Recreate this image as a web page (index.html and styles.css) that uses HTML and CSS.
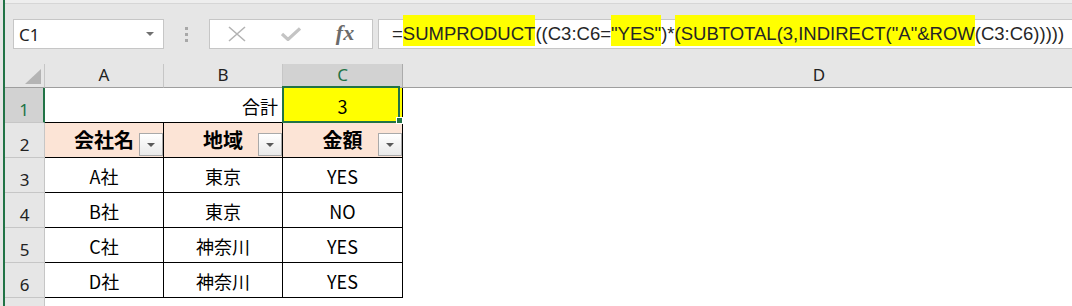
FILE: index.html
```html
<!DOCTYPE html>
<html lang="ja">
<head>
  <meta charset="UTF-8" />
  <title>Excel - SUMPRODUCT</title>
  <link rel="stylesheet" href="styles.css">
</head>
<body>
  <div class="excel">
    <div class="toolbar">
      <div class="ribbon-edge"></div>
      <div class="formula-row">
        <div class="namebox">
          <span>C1</span>
          <span class="caret"></span>
        </div>
        <div class="grip"><i></i><i></i><i></i></div>
        <div class="fxbox">
          <span class="fxbtn">
            <svg width="18" height="16" viewBox="0 0 18 16"><path d="M1 1L17 15M17 1L1 15" stroke="#b3b3b3" stroke-width="1.6" fill="none"/></svg>
          </span>
          <span class="fxbtn">
            <svg width="20" height="14" viewBox="0 0 20 14"><path d="M1 7L7 12.5L19 1.5" stroke="#c4c4c4" stroke-width="3.2" fill="none"/></svg>
          </span>
          <span class="fxbtn fx">fx</span>
        </div>
        <div class="formula"><span class="expr">=<mark>SUMPRODUCT</mark>((C3:C6=<mark>"YES"</mark>)*<mark>(SUBTOTAL(3,INDIRECT("A"&amp;ROW</mark>(C3:C6)))))</span></div>
      </div>
    </div>

    <div class="sheet">
      <div class="corner"><span class="tri"></span></div>
      <div class="colhead">A</div>
      <div class="colhead">B</div>
      <div class="colhead active">C</div>
      <div class="colhead last">D</div>

      <div class="rowhead active">1</div>
      <div class="cell edge"></div>
      <div class="cell edge right">合計</div>
      <div class="cell t total">3<span class="sel"><span class="handle"></span></span></div>
      <div class="cell"></div>

      <div class="rowhead">2</div>
      <div class="cell t th">会社名<span class="filter"></span></div>
      <div class="cell t th">地域<span class="filter"></span></div>
      <div class="cell t th">金額<span class="filter"></span></div>
      <div class="cell"></div>

      <div class="rowhead">3</div>
      <div class="cell t">A社</div>
      <div class="cell t">東京</div>
      <div class="cell t">YES</div>
      <div class="cell"></div>

      <div class="rowhead">4</div>
      <div class="cell t">B社</div>
      <div class="cell t">東京</div>
      <div class="cell t">NO</div>
      <div class="cell"></div>

      <div class="rowhead">5</div>
      <div class="cell t">C社</div>
      <div class="cell t">神奈川</div>
      <div class="cell t">YES</div>
      <div class="cell"></div>

      <div class="rowhead">6</div>
      <div class="cell t">D社</div>
      <div class="cell t">神奈川</div>
      <div class="cell t">YES</div>
      <div class="cell"></div>

      <div class="rowhead"></div>
    </div>
  </div>
</body>
</html>
```

FILE: styles.css
```css
:root {
  --chrome: #e6e6e6;
  --chrome-dark: #d2d2d2;
  --line: #c6c6c6;
  --green: #217346;
  --peach: #fce4d6;
  --text: #222222;
}

* {
  box-sizing: border-box;
  margin: 0;
  padding: 0;
}

body {
  width: 1072px;
  height: 306px;
  overflow: hidden;
  background-color: var(--chrome);
  font-family: "Noto Sans CJK JP", "Noto Sans", sans-serif;
  color: #000;
}

.excel {
  height: 306px;
  margin-left: 3px;
  border-left: 2px solid var(--green);
  overflow: hidden;
}

/* formula bar area */
.toolbar {
  height: 64px;
  background-color: var(--chrome);
}

.ribbon-edge {
  height: 4px;
  background-color: #eeeeee;
  border-bottom: 1px solid #d6d6d6;
}

.formula-row {
  display: flex;
  align-items: stretch;
  height: 30px;
  margin-top: 15px;
  padding-left: 8px;
}

.namebox {
  width: 151px;
  display: flex;
  align-items: center;
  justify-content: space-between;
  padding: 0 9px 0 5px;
  background-color: #fff;
  border: 1px solid var(--line);
  font-family: "Noto Sans", sans-serif;
  font-size: 17px;
  color: var(--text);
}

.caret {
  width: 0;
  height: 0;
  border-left: 4px solid transparent;
  border-right: 4px solid transparent;
  border-top: 4px solid #707070;
}

.grip {
  width: 45px;
  display: flex;
  flex-direction: column;
  align-items: center;
  justify-content: center;
  gap: 3px;
}

.grip i {
  width: 3px;
  height: 3px;
  background-color: #a8a8a8;
}

.fxbox {
  width: 164px;
  display: flex;
  background-color: #fff;
  border: 1px solid var(--line);
}

.fxbtn {
  flex: 1;
  display: flex;
  align-items: center;
  justify-content: center;
}

.fx {
  font-family: "Liberation Serif", serif;
  font-style: italic;
  font-weight: bold;
  font-size: 22px;
  color: #6b6b6b;
  padding-bottom: 2px;
}

.formula {
  flex: 1;
  margin-left: 5px;
  margin-right: -2px;
  padding-left: 13px;
  display: flex;
  align-items: center;
  white-space: nowrap;
  background-color: #fff;
  border: 1px solid var(--line);
  font-family: "Liberation Sans", sans-serif;
  font-size: 18.5px;
  color: #262626;
}

.expr {
  line-height: 1;
}

mark {
  background-color: #ffff00;
  color: inherit;
  padding: 8px 0 2px;
}

/* sheet grid */
.sheet {
  display: grid;
  grid-template-columns: 40px 119px 119px 120px 832px;
  grid-template-rows: 24px repeat(6, 35px) 35px;
  background-color: #fff;
}

.corner,
.colhead,
.rowhead {
  background-color: var(--chrome);
  color: var(--text);
  font-family: "Noto Sans", sans-serif;
  font-size: 17px;
  line-height: 1;
}

.corner {
  display: flex;
  align-items: flex-end;
  justify-content: flex-end;
  padding: 0 3px 3px 0;
  border-right: 1px solid var(--line);
  border-bottom: 1px solid #9e9e9e;
}

.tri {
  width: 16px;
  height: 15px;
  background-color: #b4b4b4;
  clip-path: polygon(100% 0, 100% 100%, 0 100%);
}

.colhead {
  display: flex;
  align-items: flex-end;
  justify-content: center;
  padding-bottom: 4px;
  border-right: 1px solid var(--line);
  border-bottom: 1px solid #9e9e9e;
}

.colhead.active {
  background-color: var(--chrome-dark);
  color: var(--green);
  border-right-color: #ababab;
}

.colhead.last {
  border-right: none;
}

.rowhead {
  display: flex;
  align-items: flex-end;
  justify-content: center;
  padding-bottom: 4px;
  border-right: 1px solid var(--line);
  border-bottom: 1px solid var(--line);
}

.rowhead.active {
  background-color: var(--chrome-dark);
  color: var(--green);
  border-right: 2px solid var(--green);
}

.cell {
  position: relative;
  display: flex;
  align-items: center;
  justify-content: center;
  padding-top: 2px;
  font-size: 18px;
  line-height: 1;
}

.cell.t {
  border-right: 1px solid #000;
  border-bottom: 1px solid #000;
}

.cell.edge {
  border-bottom: 1px solid #000;
}

.cell.right {
  justify-content: flex-end;
  padding-right: 5px;
}

.cell.total {
  background-color: #ffff00;
}

.sel {
  position: absolute;
  left: -1px;
  top: -2px;
  right: 2px;
  bottom: -1px;
  border: 2px solid var(--green);
  z-index: 2;
}

.handle {
  position: absolute;
  right: -5px;
  bottom: -3px;
  width: 7px;
  height: 7px;
  background-color: var(--green);
  border: 1px solid #fff;
}

.cell.th {
  background-color: var(--peach);
  font-size: 20px;
  font-weight: bold;
  padding-top: 0;
}

.filter {
  position: absolute;
  right: 0;
  bottom: 1px;
  width: 24px;
  height: 23px;
  display: flex;
  align-items: center;
  justify-content: center;
  border: 1px solid #a9a9a9;
  background: linear-gradient(#ffffff, #e9e9e9);
}

.filter::after {
  content: "";
  border-left: 4px solid transparent;
  border-right: 4px solid transparent;
  border-top: 4px solid #595959;
}
```
